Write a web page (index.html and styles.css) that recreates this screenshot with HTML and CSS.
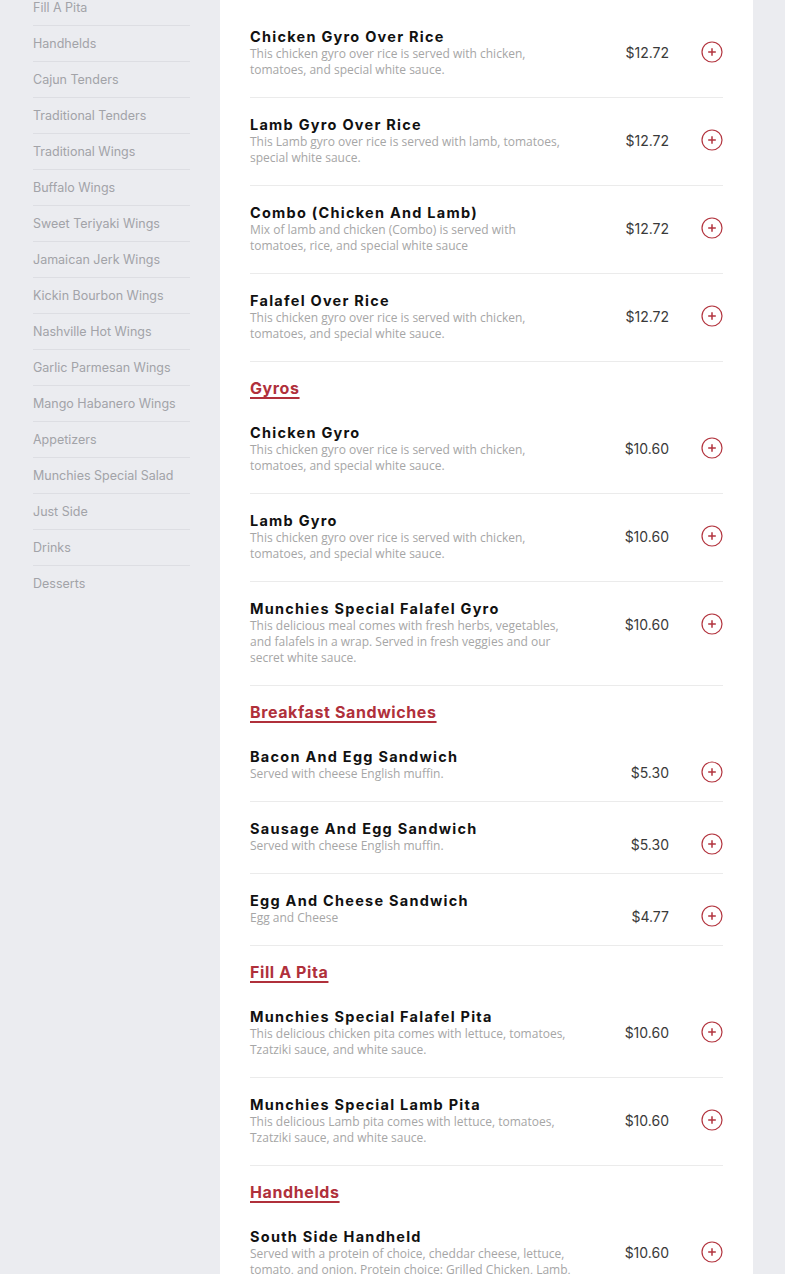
FILE: index.html
```html
<!DOCTYPE html>
<html lang="en">
<head>
<meta charset="utf-8">
<title>Menu</title>
<link rel="stylesheet" href="styles.css">
</head>
<body>
<div class="page">
  <nav class="sidebar">
    <ul class="cat-list">
      <li class="cat">Fill A Pita</li>
      <li class="cat">Handhelds</li>
      <li class="cat">Cajun Tenders</li>
      <li class="cat">Traditional Tenders</li>
      <li class="cat">Traditional Wings</li>
      <li class="cat">Buffalo Wings</li>
      <li class="cat">Sweet Teriyaki Wings</li>
      <li class="cat">Jamaican Jerk Wings</li>
      <li class="cat">Kickin Bourbon Wings</li>
      <li class="cat">Nashville Hot Wings</li>
      <li class="cat">Garlic Parmesan Wings</li>
      <li class="cat">Mango Habanero Wings</li>
      <li class="cat">Appetizers</li>
      <li class="cat">Munchies Special Salad</li>
      <li class="cat">Just Side</li>
      <li class="cat">Drinks</li>
      <li class="cat">Desserts</li>
    </ul>
  </nav>
  <main class="menu">
    <div class="item">
      <div class="info"><h3 class="name">Chicken Gyro Over Rice</h3><p class="desc">This chicken gyro over rice is served with chicken, tomatoes, and special white sauce.</p></div>
      <div class="buy"><span class="price">$12.72</span><button class="add" aria-label="Add"><svg viewBox="0 0 22 22" width="22" height="22"><circle cx="11" cy="11" r="10" fill="none" stroke="#b3353f" stroke-width="1.2"/><path d="M11 7.2v7.6M7.2 11h7.6" stroke="#b3353f" stroke-width="1.5" fill="none"/></svg></button></div>
    </div>
    <div class="item">
      <div class="info"><h3 class="name">Lamb Gyro Over Rice</h3><p class="desc">This Lamb gyro over rice is served with lamb, tomatoes, special white sauce.</p></div>
      <div class="buy"><span class="price">$12.72</span><button class="add" aria-label="Add"><svg viewBox="0 0 22 22" width="22" height="22"><circle cx="11" cy="11" r="10" fill="none" stroke="#b3353f" stroke-width="1.2"/><path d="M11 7.2v7.6M7.2 11h7.6" stroke="#b3353f" stroke-width="1.5" fill="none"/></svg></button></div>
    </div>
    <div class="item">
      <div class="info"><h3 class="name">Combo (Chicken And Lamb)</h3><p class="desc">Mix of lamb and chicken (Combo) is served with tomatoes, rice, and special white sauce</p></div>
      <div class="buy"><span class="price">$12.72</span><button class="add" aria-label="Add"><svg viewBox="0 0 22 22" width="22" height="22"><circle cx="11" cy="11" r="10" fill="none" stroke="#b3353f" stroke-width="1.2"/><path d="M11 7.2v7.6M7.2 11h7.6" stroke="#b3353f" stroke-width="1.5" fill="none"/></svg></button></div>
    </div>
    <div class="item">
      <div class="info"><h3 class="name">Falafel Over Rice</h3><p class="desc">This chicken gyro over rice is served with chicken, tomatoes, and special white sauce.</p></div>
      <div class="buy"><span class="price">$12.72</span><button class="add" aria-label="Add"><svg viewBox="0 0 22 22" width="22" height="22"><circle cx="11" cy="11" r="10" fill="none" stroke="#b3353f" stroke-width="1.2"/><path d="M11 7.2v7.6M7.2 11h7.6" stroke="#b3353f" stroke-width="1.5" fill="none"/></svg></button></div>
    </div>

    <h2 class="section">Gyros</h2>
    <div class="item">
      <div class="info"><h3 class="name">Chicken Gyro</h3><p class="desc">This chicken gyro over rice is served with chicken, tomatoes, and special white sauce.</p></div>
      <div class="buy"><span class="price">$10.60</span><button class="add" aria-label="Add"><svg viewBox="0 0 22 22" width="22" height="22"><circle cx="11" cy="11" r="10" fill="none" stroke="#b3353f" stroke-width="1.2"/><path d="M11 7.2v7.6M7.2 11h7.6" stroke="#b3353f" stroke-width="1.5" fill="none"/></svg></button></div>
    </div>
    <div class="item">
      <div class="info"><h3 class="name">Lamb Gyro</h3><p class="desc">This chicken gyro over rice is served with chicken, tomatoes, and special white sauce.</p></div>
      <div class="buy"><span class="price">$10.60</span><button class="add" aria-label="Add"><svg viewBox="0 0 22 22" width="22" height="22"><circle cx="11" cy="11" r="10" fill="none" stroke="#b3353f" stroke-width="1.2"/><path d="M11 7.2v7.6M7.2 11h7.6" stroke="#b3353f" stroke-width="1.5" fill="none"/></svg></button></div>
    </div>
    <div class="item">
      <div class="info"><h3 class="name">Munchies Special Falafel Gyro</h3><p class="desc">This delicious meal comes with fresh herbs, vegetables, and falafels in a wrap. Served in fresh veggies and our secret white sauce.</p></div>
      <div class="buy"><span class="price">$10.60</span><button class="add" aria-label="Add"><svg viewBox="0 0 22 22" width="22" height="22"><circle cx="11" cy="11" r="10" fill="none" stroke="#b3353f" stroke-width="1.2"/><path d="M11 7.2v7.6M7.2 11h7.6" stroke="#b3353f" stroke-width="1.5" fill="none"/></svg></button></div>
    </div>

    <h2 class="section">Breakfast Sandwiches</h2>
    <div class="item">
      <div class="info"><h3 class="name">Bacon And Egg Sandwich</h3><p class="desc">Served with cheese English muffin.</p></div>
      <div class="buy"><span class="price">$5.30</span><button class="add" aria-label="Add"><svg viewBox="0 0 22 22" width="22" height="22"><circle cx="11" cy="11" r="10" fill="none" stroke="#b3353f" stroke-width="1.2"/><path d="M11 7.2v7.6M7.2 11h7.6" stroke="#b3353f" stroke-width="1.5" fill="none"/></svg></button></div>
    </div>
    <div class="item">
      <div class="info"><h3 class="name">Sausage And Egg Sandwich</h3><p class="desc">Served with cheese English muffin.</p></div>
      <div class="buy"><span class="price">$5.30</span><button class="add" aria-label="Add"><svg viewBox="0 0 22 22" width="22" height="22"><circle cx="11" cy="11" r="10" fill="none" stroke="#b3353f" stroke-width="1.2"/><path d="M11 7.2v7.6M7.2 11h7.6" stroke="#b3353f" stroke-width="1.5" fill="none"/></svg></button></div>
    </div>
    <div class="item">
      <div class="info"><h3 class="name">Egg And Cheese Sandwich</h3><p class="desc">Egg and Cheese</p></div>
      <div class="buy"><span class="price">$4.77</span><button class="add" aria-label="Add"><svg viewBox="0 0 22 22" width="22" height="22"><circle cx="11" cy="11" r="10" fill="none" stroke="#b3353f" stroke-width="1.2"/><path d="M11 7.2v7.6M7.2 11h7.6" stroke="#b3353f" stroke-width="1.5" fill="none"/></svg></button></div>
    </div>

    <h2 class="section">Fill A Pita</h2>
    <div class="item">
      <div class="info"><h3 class="name">Munchies Special Falafel Pita</h3><p class="desc">This delicious chicken pita comes with lettuce, tomatoes, Tzatziki sauce, and white sauce.</p></div>
      <div class="buy"><span class="price">$10.60</span><button class="add" aria-label="Add"><svg viewBox="0 0 22 22" width="22" height="22"><circle cx="11" cy="11" r="10" fill="none" stroke="#b3353f" stroke-width="1.2"/><path d="M11 7.2v7.6M7.2 11h7.6" stroke="#b3353f" stroke-width="1.5" fill="none"/></svg></button></div>
    </div>
    <div class="item">
      <div class="info"><h3 class="name">Munchies Special Lamb Pita</h3><p class="desc">This delicious Lamb pita comes with lettuce, tomatoes, Tzatziki sauce, and white sauce.</p></div>
      <div class="buy"><span class="price">$10.60</span><button class="add" aria-label="Add"><svg viewBox="0 0 22 22" width="22" height="22"><circle cx="11" cy="11" r="10" fill="none" stroke="#b3353f" stroke-width="1.2"/><path d="M11 7.2v7.6M7.2 11h7.6" stroke="#b3353f" stroke-width="1.5" fill="none"/></svg></button></div>
    </div>

    <h2 class="section">Handhelds</h2>
    <div class="item">
      <div class="info"><h3 class="name">South Side Handheld</h3><p class="desc">Served with a protein of choice, cheddar cheese, lettuce, tomato, and onion. Protein choice: Grilled Chicken, Lamb, or Falafel.</p></div>
      <div class="buy"><span class="price">$10.60</span><button class="add" aria-label="Add"><svg viewBox="0 0 22 22" width="22" height="22"><circle cx="11" cy="11" r="10" fill="none" stroke="#b3353f" stroke-width="1.2"/><path d="M11 7.2v7.6M7.2 11h7.6" stroke="#b3353f" stroke-width="1.5" fill="none"/></svg></button></div>
    </div>
  </main>
</div>
</body>
</html>
```
FILE: styles.css
```css
html, body {
  margin: 0;
  padding: 0;
  height: 1274px;
  overflow: hidden;
  background: #ebecf0;
}

.page {
  display: flex;
  align-items: flex-start;
  gap: 30px;
  padding-left: 33px;
}

.sidebar {
  width: 157px;
  flex: 0 0 157px;
}

.cat-list {
  list-style: none;
  margin: -10px 0 0;
  padding: 0;
}

.cat {
  height: 35px;
  display: flex;
  align-items: center;
  border-bottom: 1px solid #dddee3;
  font-family: Inter, "Liberation Sans", sans-serif;
  font-size: 12.5px;
  color: #a2a3a8;
}

.cat:last-child {
  border-bottom: none;
}

.menu {
  width: 473px;
  flex: 0 0 473px;
  background: #ffffff;
  padding: 10px 30px 0;
  min-height: 1300px;
}

.item {
  display: flex;
  align-items: flex-start;
  justify-content: space-between;
  padding: 18px 0 19px;
  border-bottom: 1px solid #ebebeb;
}

.info {
  width: 322px;
}

.name {
  margin: 0;
  font-family: Inter, "Liberation Sans", sans-serif;
  font-weight: 700;
  font-size: 14.5px;
  line-height: 18px;
  letter-spacing: 1.25px;
  color: #111111;
}

.desc {
  margin: 0;
  font-family: "Open Sans", sans-serif;
  font-size: 12px;
  line-height: 16px;
  color: #a6a6a6;
}

.buy {
  display: flex;
  align-items: center;
  gap: 32px;
  margin-top: 13px;
  margin-bottom: -4px;
  height: 22px;
}

.price {
  font-family: Inter, "Liberation Sans", sans-serif;
  font-size: 14px;
  color: #3a3a3a;
}

.add {
  width: 22px;
  height: 22px;
  padding: 0;
  border: none;
  background: transparent;
  display: block;
}

.add svg {
  display: block;
}

.section {
  margin: 0;
  padding: 17px 0 9px;
  font-family: Inter, "Liberation Sans", sans-serif;
  font-weight: 700;
  font-size: 16px;
  line-height: 18px;
  letter-spacing: 0.6px;
  color: #b0303b;
  text-decoration: underline;
  text-underline-offset: 3px;
  text-decoration-thickness: 1.5px;
}
```
